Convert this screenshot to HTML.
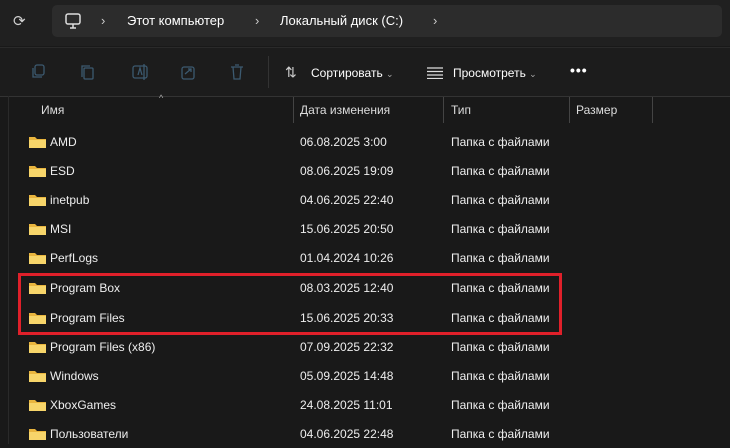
<!DOCTYPE html><html><head><meta charset="utf-8"><style>
body{margin:0;width:730px;height:444px;background:#191919;font-family:"Liberation Sans",sans-serif;color:#fff;overflow:hidden;position:relative;font-size:12px}
.a{position:absolute}
.top{left:0;top:0;width:730px;height:46px;background:#202020}
.addr{left:52px;top:5px;width:670px;height:32px;background:#2c2c2c;border-radius:5px}
.tb{left:0;top:47px;width:730px;height:48px;background:#1c1c1c;border-top:1px solid #2a2a2a;border-bottom:1px solid #333}
.hd{color:#ddd;font-size:12px;top:103px}
.vl{top:97px;width:1px;height:26px;background:#444}
.row{position:absolute;left:0;width:730px;height:29px}
.row span{position:absolute;top:8px;font-size:12px;color:#eee}
.f{position:absolute;left:29px;top:8px;width:17px;height:13px}
.g{color:#cfcfcf;font-size:13px}
</style></head><body>
<div class="a top"></div><div class="a addr"></div>
<div class="a g" style="left:13px;top:12px;font-size:15px">⟳</div>
<svg class="a" style="left:64px;top:12px" width="18" height="18" viewBox="0 0 18 18"><rect x="2" y="2" width="14" height="10" rx="2" fill="none" stroke="#ddd" stroke-width="1.5"/><path d="M6 16h6M9 12v4" stroke="#ddd" stroke-width="1.5"/></svg>
<div class="a" style="left:101px;top:13px;color:#ccc;font-size:13px">›</div>
<div class="a" style="left:127px;top:13px;font-size:13px">Этот компьютер</div>
<div class="a" style="left:255px;top:13px;color:#ccc;font-size:13px">›</div>
<div class="a" style="left:280px;top:13px;font-size:13px">Локальный диск (C:)</div>
<div class="a" style="left:433px;top:13px;color:#ccc;font-size:13px">›</div>
<div class="a tb"></div>
<svg class="a" style="left:30px;top:62px" width="230" height="20" viewBox="0 0 230 20" fill="none" stroke="#3c5a70" stroke-width="1.3"><rect x="5" y="3" width="9" height="10" rx="2"/><path d="M3 6v9h9"/><rect x="54" y="6" width="9" height="11" rx="1"/><path d="M52 15V4h8"/><rect x="103" y="4" width="14" height="12" rx="2"/><path d="M108 13l2-7 2 7M114 2v16"/><rect x="152" y="5" width="12" height="12" rx="2"/><path d="M155 12l6-5M158 7h3v3"/><path d="M201 5h12M203 5l1 12h6l1-12M205 3h4"/></svg>
<div class="a" style="left:268px;top:56px;width:1px;height:32px;background:#333"></div>
<div class="a" style="left:285px;top:64px;color:#ccc;font-size:14px">⇅</div>
<div class="a" style="left:311px;top:66px;font-size:12px">Сортировать <span style="color:#aaa;font-size:9px">⌄</span></div>
<svg class="a" style="left:427px;top:67px" width="16" height="12"><path d="M0 1h16M0 4.5h16M0 8h16M0 11.5h16" stroke="#ddd" stroke-width="1.2"/></svg>
<div class="a" style="left:453px;top:66px;font-size:12px">Просмотреть <span style="color:#aaa;font-size:9px">⌄</span></div>
<div class="a" style="left:570px;top:62px;font-size:14px;font-weight:bold;letter-spacing:1px">•••</div>
<div class="a" style="left:8px;top:96px;width:1px;height:348px;background:#2a2a2a"></div>
<div class="a" style="left:159px;top:93px;color:#aaa;font-size:9px">^</div>
<div class="a hd" style="left:41px">Имя</div>
<div class="a vl" style="left:293px"></div><div class="a hd" style="left:300px">Дата изменения</div>
<div class="a vl" style="left:443px"></div><div class="a hd" style="left:451px">Тип</div>
<div class="a vl" style="left:569px"></div><div class="a hd" style="left:576px">Размер</div>
<div class="a vl" style="left:652px"></div>
<div class="row" style="top:127px"><svg class="f"><path d="M0 2h6l2 2h9v9H0z" fill="#e9b53e"/><path d="M0 5h17v8H0z" fill="#f7d56a"/></svg><span style="left:50px">AMD</span><span style="left:300px">06.08.2025 3:00</span><span style="left:451px">Папка с файлами</span></div>
<div class="row" style="top:156px"><svg class="f"><path d="M0 2h6l2 2h9v9H0z" fill="#e9b53e"/><path d="M0 5h17v8H0z" fill="#f7d56a"/></svg><span style="left:50px">ESD</span><span style="left:300px">08.06.2025 19:09</span><span style="left:451px">Папка с файлами</span></div>
<div class="row" style="top:185px"><svg class="f"><path d="M0 2h6l2 2h9v9H0z" fill="#e9b53e"/><path d="M0 5h17v8H0z" fill="#f7d56a"/></svg><span style="left:50px">inetpub</span><span style="left:300px">04.06.2025 22:40</span><span style="left:451px">Папка с файлами</span></div>
<div class="row" style="top:214px"><svg class="f"><path d="M0 2h6l2 2h9v9H0z" fill="#e9b53e"/><path d="M0 5h17v8H0z" fill="#f7d56a"/></svg><span style="left:50px">MSI</span><span style="left:300px">15.06.2025 20:50</span><span style="left:451px">Папка с файлами</span></div>
<div class="row" style="top:243px"><svg class="f"><path d="M0 2h6l2 2h9v9H0z" fill="#e9b53e"/><path d="M0 5h17v8H0z" fill="#f7d56a"/></svg><span style="left:50px">PerfLogs</span><span style="left:300px">01.04.2024 10:26</span><span style="left:451px">Папка с файлами</span></div>
<div class="row" style="top:273px"><svg class="f"><path d="M0 2h6l2 2h9v9H0z" fill="#e9b53e"/><path d="M0 5h17v8H0z" fill="#f7d56a"/></svg><span style="left:50px">Program Box</span><span style="left:300px">08.03.2025 12:40</span><span style="left:451px">Папка с файлами</span></div>
<div class="row" style="top:303px"><svg class="f"><path d="M0 2h6l2 2h9v9H0z" fill="#e9b53e"/><path d="M0 5h17v8H0z" fill="#f7d56a"/></svg><span style="left:50px">Program Files</span><span style="left:300px">15.06.2025 20:33</span><span style="left:451px">Папка с файлами</span></div>
<div class="row" style="top:332px"><svg class="f"><path d="M0 2h6l2 2h9v9H0z" fill="#e9b53e"/><path d="M0 5h17v8H0z" fill="#f7d56a"/></svg><span style="left:50px">Program Files (x86)</span><span style="left:300px">07.09.2025 22:32</span><span style="left:451px">Папка с файлами</span></div>
<div class="row" style="top:361px"><svg class="f"><path d="M0 2h6l2 2h9v9H0z" fill="#e9b53e"/><path d="M0 5h17v8H0z" fill="#f7d56a"/></svg><span style="left:50px">Windows</span><span style="left:300px">05.09.2025 14:48</span><span style="left:451px">Папка с файлами</span></div>
<div class="row" style="top:390px"><svg class="f"><path d="M0 2h6l2 2h9v9H0z" fill="#e9b53e"/><path d="M0 5h17v8H0z" fill="#f7d56a"/></svg><span style="left:50px">XboxGames</span><span style="left:300px">24.08.2025 11:01</span><span style="left:451px">Папка с файлами</span></div>
<div class="row" style="top:419px"><svg class="f"><path d="M0 2h6l2 2h9v9H0z" fill="#e9b53e"/><path d="M0 5h17v8H0z" fill="#f7d56a"/></svg><span style="left:50px">Пользователи</span><span style="left:300px">04.06.2025 22:48</span><span style="left:451px">Папка с файлами</span></div>
<div class="a" style="left:18px;top:273px;width:538px;height:56px;border:3px solid #e0202a"></div>
</body></html>
